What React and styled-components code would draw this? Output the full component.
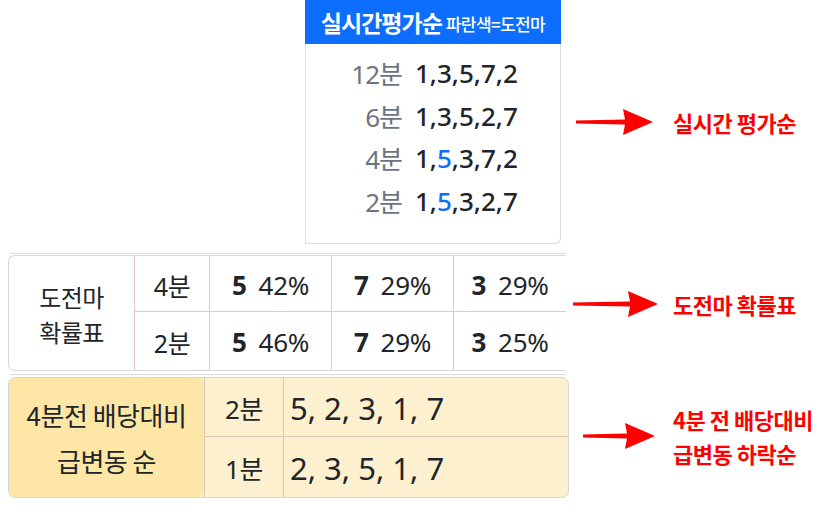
import React from "react";
import styled, { createGlobalStyle } from "styled-components";

const GlobalStyle = createGlobalStyle`
  body {
    margin: 0;
    background: #fff;
    font-family: "Noto Sans", "Noto Sans CJK KR", sans-serif;
    color: #212529;
  }
`;

const Page = styled.div`
  width: 839px;
  height: 506px;
  display: flex;
  flex-direction: column;
  overflow: hidden;
`;

const Row = styled.div`
  display: flex;
  align-items: center;
  padding-top: ${(p) => p.$top || 0}px;
`;

const Left = styled.div`
  width: 573px;
  flex-shrink: 0;
  display: flex;
  flex-direction: column;
`;

const Divider = styled.div`
  margin: 0 0 ${(p) => p.$after}px 10px;
  width: 556px;
  border-top: 1px solid #dcdcdc;
`;

/* 실시간 평가순 */
const Panel = styled.div`
  margin-left: 305px;
  width: 256px;
  height: 244px;
  box-sizing: border-box;
  border: 1px solid #dcdcdc;
  border-top: none;
  border-radius: 0 0 6px 0;
`;

const PanelHead = styled.div`
  height: 44px;
  background: #0d6efd;
  color: #fff;
  display: flex;
  align-items: center;
  justify-content: center;
  gap: 4px;
  margin: 0 -1px;
`;

const HeadTitle = styled.span`
  font-family: "Noto Sans CJK KR", sans-serif;
  font-size: 23px;
  font-weight: 700;
  letter-spacing: -1px;
`;

const HeadSub = styled.span`
  font-family: "Noto Sans CJK KR", sans-serif;
  font-size: 17px;
  font-weight: 500;
  letter-spacing: -0.6px;
  margin-top: 2px;
`;

const OrderList = styled.div`
  padding-top: 8px;
  display: flex;
  flex-direction: column;
`;

const OrderRow = styled.div`
  display: flex;
  align-items: center;
  height: 42.5px;
  font-size: 26px;
`;

const OrderLabel = styled.span`
  width: 96px;
  text-align: right;
  color: #6c757d;
  letter-spacing: -1px;
`;

const OrderValue = styled.span`
  margin-left: 13px;
  font-weight: 500;
  color: #212529;
`;

const Blue = styled.span`
  color: #0d6efd;
`;

/* 도전마 확률표 */
const ProbTable = styled.div`
  margin-left: 8px;
  width: 557px;
  display: grid;
  grid-template-columns: 125px 75px 122px 122px 113px;
  grid-template-rows: 56px 58px;
  border: 1px solid #d6d6d6;
  border-right: none;
  border-radius: 7px 0 0 7px;
  box-sizing: border-box;
`;

const LabelCell = styled.div`
  grid-row: span 2;
  display: flex;
  align-items: center;
  justify-content: center;
  text-align: center;
  font-family: "Noto Sans CJK KR", sans-serif;
  font-size: ${(p) => p.$size}px;
  line-height: ${(p) => p.$lh}px;
  letter-spacing: -0.5px;
  background: ${(p) => p.$bg || "transparent"};
  border-radius: inherit;
  padding-top: ${(p) => p.$pt || 0}px;
`;

const Cell = styled.div`
  display: flex;
  align-items: center;
  justify-content: ${(p) => (p.$start ? "flex-start" : "center")};
  padding-left: ${(p) => (p.$start ? 6 : 0)}px;
  border-left: 1px solid ${(p) => p.$line || "#e3c9c9"};
  border-bottom: ${(p) => (p.$top ? `1px solid ${p.$line || "#e3c9c9"}` : "none")};
  font-size: ${(p) => p.$size || 25}px;
  letter-spacing: ${(p) => (p.$start ? 0 : -0.3)}px;
  padding-top: 2px;
`;

const Num = styled.b`
  font-weight: 700;
  margin-right: 12px;
`;

/* 배당 급변동 */
const DropTable = styled.div`
  margin-left: 8px;
  width: 561px;
  display: grid;
  grid-template-columns: 195px 79px 1fr;
  grid-template-rows: 59px 60px;
  border: 1px solid #d6d6d6;
  border-radius: 7px;
  background: #fcf0cf;
  box-sizing: border-box;
  overflow: hidden;
`;

/* 주석 */
const Note = styled.div`
  display: flex;
  align-items: center;
  margin-left: ${(p) => p.$shift || 0}px;
  margin-top: ${(p) => p.$dy || 0}px;
`;

const NoteText = styled.div`
  margin-left: ${(p) => p.$gap}px;
  color: #ff0000;
  font-family: "Noto Sans CJK KR", sans-serif;
  font-weight: 700;
  font-size: 22px;
  line-height: 34px;
  letter-spacing: -0.5px;
`;

const Arrow = ({ w }) => (
  <svg width={w} height="28" viewBox={`0 0 ${w} 28`}>
    <polygon
      points={`0,12.5 ${w - 28},11.5 ${w - 30},1 ${w},14 ${w - 30},27 ${w - 28},16.5 0,15.5`}
      fill="#ff0000"
    />
  </svg>
);

const orders = [
  { label: "12분", value: ["1,3,5,7,2"] },
  { label: "6분", value: ["1,3,5,2,7"] },
  { label: "4분", value: ["1,", "5", ",3,7,2"] },
  { label: "2분", value: ["1,", "5", ",3,2,7"] },
];

const probs = [
  { min: "4분", items: [["5", "42%"], ["7", "29%"], ["3", "29%"]] },
  { min: "2분", items: [["5", "46%"], ["7", "29%"], ["3", "25%"]] },
];

const drops = [
  { min: "2분", order: "5, 2, 3, 1, 7" },
  { min: "1분", order: "2, 3, 5, 1, 7" },
];

export default function App() {
  return (
    <>
      <GlobalStyle />
      <Page>
        <Row>
          <Left>
            <Panel>
              <PanelHead>
                <HeadTitle>실시간평가순</HeadTitle>
                <HeadSub>파란색=도전마</HeadSub>
              </PanelHead>
              <OrderList>
                {orders.map((o) => (
                  <OrderRow key={o.label}>
                    <OrderLabel>{o.label}</OrderLabel>
                    <OrderValue>
                      {o.value.length === 1 ? (
                        o.value[0]
                      ) : (
                        <>
                          {o.value[0]}
                          <Blue>{o.value[1]}</Blue>
                          {o.value[2]}
                        </>
                      )}
                    </OrderValue>
                  </OrderRow>
                ))}
              </OrderList>
            </Panel>
          </Left>
          <Note $shift={3}>
            <Arrow w={77} />
            <NoteText $gap={20}>실시간 평가순</NoteText>
          </Note>
        </Row>

        <Row $top={9}>
          <Left>
            <Divider $after={1} />
            <ProbTable>
              <LabelCell $size={24} $lh={35} $pt={2}>
                도전마
                <br />
                확률표
              </LabelCell>
              {probs.map((r, i) => (
                <React.Fragment key={r.min}>
                  <Cell $top={i === 0}>{r.min}</Cell>
                  {r.items.map(([n, p]) => (
                    <Cell key={n} $top={i === 0} $size={26}>
                      <Num>{n}</Num>
                      {p}
                    </Cell>
                  ))}
                </React.Fragment>
              ))}
            </ProbTable>
          </Left>
          <Note $dy={-16}>
            <Arrow w={85} />
            <NoteText $gap={15}>도전마 확률표</NoteText>
          </Note>
        </Row>

        <Row $top={3}>
          <Left>
            <Divider $after={2} />
            <DropTable>
              <LabelCell $bg="#fde6a6" $size={26} $lh={46}>
                4분전 배당대비
                <br />
                급변동 순
              </LabelCell>
              {drops.map((d, i) => (
                <React.Fragment key={d.min}>
                  <Cell $top={i === 0} $line="#dfc6b9" $size={26}>
                    {d.min}
                  </Cell>
                  <Cell $top={i === 0} $line="#dfc6b9" $size={31} $start>
                    {d.order}
                  </Cell>
                </React.Fragment>
              ))}
            </DropTable>
          </Left>
          <Note $shift={10}>
            <Arrow w={72} />
            <NoteText $gap={18}>
              4분 전 배당대비
              <br />
              급변동 하락순
            </NoteText>
          </Note>
        </Row>
      </Page>
    </>
  );
}
